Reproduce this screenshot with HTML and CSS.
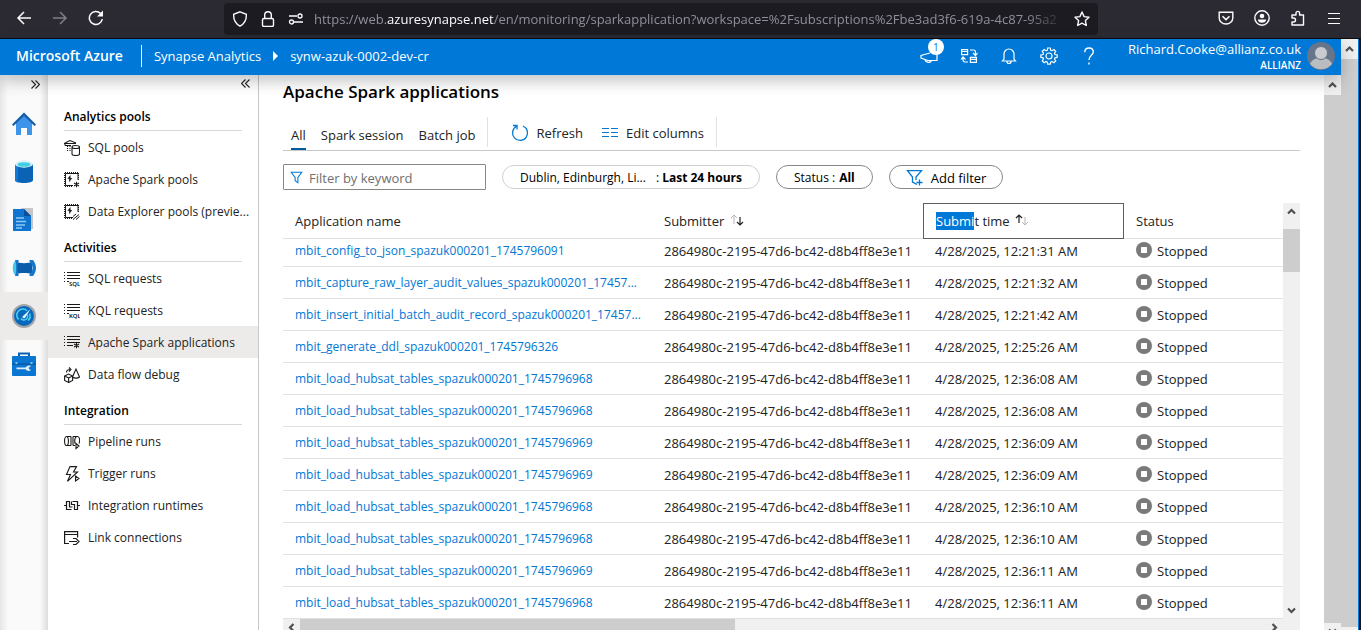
FILE: index.html
```
<!DOCTYPE html>
<html lang="en">
<head>
  <meta charset="UTF-8">
  <title>Synapse Analytics</title>
  <meta name="viewport" content="width=device-width, initial-scale=1.0">
  <link rel="stylesheet" href="styles.css">
</head>
<body>

  <svg class="sprite" aria-hidden="true">
    <symbol id="up" viewBox="0 0 17 17"><path d="M5 10.500l3.500-3.500 3.500 3.500" fill="none" stroke="#505050" stroke-width="2.200"/></symbol>
    <symbol id="stopped" viewBox="0 0 16 16"><circle cx="8" cy="8" r="8" fill="#7a7a7a"/><rect x="5" y="5" width="6" height="6" rx=".5" fill="#fff"/></symbol>
    <symbol id="chip" viewBox="0 0 16 16"><path d="M9 13.500H1.500V1.500h12.500V8" fill="none" stroke="#1b1a19"/><path d="M.5 1v13M1 .5h14M14.500 1v7M1 14.500h8" fill="none" stroke="#1b1a19" stroke-dasharray="1 1"/><path d="M6.500 3L3.300 6.800h1.900v3.500l3-4.200H6.500z" fill="#1b1a19"/></symbol>
    <symbol id="lines" viewBox="0 0 16 16"><path d="M3 1.500h13M3 4.500h13M3 7.500h13M0 1.500h1M0 4.500h1M0 7.500h1M0 10.500h1M3 10.500h2" stroke="#1b1a19"/></symbol>
    <symbol id="star6" viewBox="0 0 6 6"><path d="M3 0v6M.4 1.500l5.200 3M.4 4.500l5.200-3" stroke="#1b1a19" stroke-width="1.100"/></symbol>
    <symbol id="funnel" viewBox="0 0 16 16"><path d="M1.500 1.500h13L9.700 8v6.500L6.300 12V8z" fill="none" stroke="#0078d4" stroke-width="1.300"/></symbol>
  </svg>

  <div class="browser">
    <button class="icon-btn" aria-label="Back"><svg width="16" height="16" viewBox="0 0 16 16"><path d="M15 8H2M8 2L2 8l6 6" fill="none" stroke="#fbfbfe" stroke-width="1.500"/></svg></button>
    <button class="icon-btn dim" aria-label="Forward"><svg width="16" height="16" viewBox="0 0 16 16"><path d="M1 8h13M8 2l6 6-6 6" fill="none" stroke="#fbfbfe" stroke-width="1.500"/></svg></button>
    <button class="icon-btn" aria-label="Reload"><svg width="16" height="16" viewBox="0 0 16 16"><path d="M14.300 9a6.500 6.500 0 1 1-1.800-5.600" fill="none" stroke="#fbfbfe" stroke-width="1.500"/><path d="M15 .5v6H9z" fill="#fbfbfe"/></svg></button>
    <div class="address">
      <svg width="16" height="16" viewBox="0 0 16 16"><path d="M8 .8l6.300 2.500c.4 5.700-2 9.500-6.300 11.900C3.700 12.800 1.300 9 1.700 3.300z" fill="none" stroke="#fbfbfe" stroke-width="1.400"/></svg>
      <svg width="16" height="16" viewBox="0 0 16 16"><rect x="2.500" y="7.500" width="11" height="8" rx="1.500" fill="none" stroke="#fbfbfe" stroke-width="1.400"/><path d="M4.700 7.500V4a3.300 3.300 0 0 1 6.600 0v3.500" fill="none" stroke="#fbfbfe" stroke-width="1.400"/></svg>
      <svg width="16" height="16" viewBox="0 0 16 16"><path d="M1 5h8M6 11h9" stroke="#fbfbfe" stroke-width="1.400"/><circle cx="12" cy="5" r="2" fill="none" stroke="#fbfbfe" stroke-width="1.300"/><circle cx="3.500" cy="11" r="2" fill="none" stroke="#fbfbfe" stroke-width="1.300"/></svg>
      <div class="url" role="textbox" aria-label="Address">https://web.<span>azuresynapse.net</span>/en/monitoring/sparkapplication?workspace=%2Fsubscriptions%2Fbe3ad3f6-619a-4c87-95a2</div>
      <button class="star" aria-label="Bookmark"><svg width="16" height="16" viewBox="0 0 16 16"><path d="M8 1l2.100 4.600 4.900.6-3.600 3.400.9 4.900L8 12.100l-4.300 2.400.9-4.900L1 6.200l4.900-.6z" fill="none" stroke="#fbfbfe" stroke-width="1.400" stroke-linejoin="round"/></svg></button>
    </div>
    <div class="browser-tools">
      <button class="icon-btn" aria-label="Pocket"><svg width="16" height="16" viewBox="0 0 16 16"><path d="M1.200 2.200h13.600V8c0 3.500-3 6-6.800 6S1.200 11.500 1.200 8z" fill="none" stroke="#fbfbfe" stroke-width="1.400"/><path d="M4.500 6.300L8 9.600l3.500-3.300" fill="none" stroke="#fbfbfe" stroke-width="1.500"/></svg></button>
      <button class="icon-btn" aria-label="Account"><svg width="16" height="16" viewBox="0 0 16 16"><circle cx="8" cy="8" r="7.200" fill="none" stroke="#fbfbfe" stroke-width="1.400"/><circle cx="8" cy="6" r="2.300" fill="#fbfbfe"/><path d="M3.800 9.500h8.400c0 2-2 3.300-4.200 3.300S3.800 11.500 3.800 9.500z" fill="#fbfbfe"/></svg></button>
      <button class="icon-btn" aria-label="Extensions"><svg width="16" height="16" viewBox="0 0 16 16"><path d="M2 8V5h4V3.200a1.800 1.800 0 0 1 3.600 0V5H13.500v10H2v-3h1.500a1.900 1.900 0 0 0 0-4z" fill="none" stroke="#fbfbfe" stroke-width="1.400" stroke-linejoin="round"/></svg></button>
      <button class="icon-btn" aria-label="Menu"><svg width="16" height="16" viewBox="0 0 16 16"><path d="M2 3.500h12M2 8.500h12M2 13.500h12" stroke="#fbfbfe"/></svg></button>
    </div>
  </div>

  <div class="window">
    <div class="page">
      <header class="azure">
        <a class="brand" href="#">Microsoft Azure</a>
        <a class="crumb" href="#">Synapse Analytics</a>
        <svg width="5" height="10" viewBox="0 0 5 10"><path d="M0 0l5 5-5 5z" fill="#fff"/></svg>
        <a class="crumb" href="#">synw-azuk-0002-dev-cr</a>
        <div class="azure-tools">
          <button class="notify" aria-label="Announcements"><svg width="18" height="18" viewBox="0 0 18 18" fill="none" stroke="#fff" stroke-width="1.200"><path d="M17 4v9.500H8L1 11V8.500L10 6"/><path d="M5 12c0 3.500 5.500 4.500 6.500 1.500"/></svg><span class="badge">1</span></button>
          <button aria-label="Switch"><svg width="18" height="18" viewBox="0 0 18 18" fill="none" stroke="#fff" stroke-width="1.200"><path d="M1.600 2.600h6v5h-6zM1.600 4.500h6M10.400 10.400h6v5h-6zM10.400 12.400h6M10 3h3.500a2 2 0 0 1 2 2v3M13 6l2.500 2.500L17.500 6M8 15H5a2 2 0 0 1-2-2v-2.500M1 12.500L3 10l2.500 2.500"/></svg></button>
          <button aria-label="Notifications"><svg width="18" height="18" viewBox="0 0 18 18" fill="none" stroke="#fff" stroke-width="1.200"><path d="M2.500 14h13l-1.500-2V7a5 5 0 0 0-10 0v5zM7 14.500a2 2 0 0 0 4 0"/></svg></button>
          <button aria-label="Settings"><svg width="18" height="18" viewBox="0 0 18 18" fill="none" stroke="#fff" stroke-width="1.200"><path d="M7.700 1h2.600l.4 2.200 1.300.5 1.900-1.200 1.800 1.800-1.200 1.900.5 1.300 2.200.4v2.400l-2.200.5-.5 1.200 1.200 1.900-1.800 1.800-1.900-1.200-1.300.6-.4 2.100H7.700l-.4-2.100-1.300-.6-1.900 1.200-1.800-1.800L3.500 12 3 10.800l-2.200-.5V7.900L3 7.500l.5-1.300-1.200-1.900 1.800-1.800L6 3.700l1.300-.5z"/><circle cx="9" cy="9" r="3"/></svg></button>
          <button aria-label="Help"><svg width="18" height="18" viewBox="0 0 18 18" fill="none" stroke="#fff" stroke-width="1.400"><path d="M4.800 5.200C4.800 2.500 6.500 1 9 1s4.300 1.500 4.300 4C13.300 8.300 9 8.500 9 13"/><path d="M9 15.500v2"/></svg></button>
        </div>
        <div class="user"><span>Richard.Cooke@allianz.co.uk</span><strong>ALLIANZ</strong></div>
        <svg class="avatar" width="28" height="28" viewBox="0 0 28 28"><circle cx="14" cy="14" r="14" fill="#66758a"/><path d="M3 22c2-5 6-6 11-6s9 1 11 6a14 14 0 0 1-22 0z" fill="#b9bcc0"/><circle cx="14" cy="11" r="6.500" fill="#c9cbce" stroke="#66758a"/></svg>
      </header>

      <div class="workspace">
        <nav class="rail" aria-label="Hubs">
          <button class="expand" aria-label="Expand"><svg width="9" height="9" viewBox="0 0 9 9"><path d="M.5.500l4 4-4 4M4.500.500l4 4-4 4" fill="none" stroke="#222" stroke-width="1.100"/></svg></button>
          <a href="#" aria-label="Home"><svg width="24" height="24" viewBox="0 0 24 24"><path d="M4 11l8-8 8 8v12h-5v-7H9v7H4z" fill="#3d94e8"/><path d="M9 16h6v7H9z" fill="#fff"/><path d="M0 12.500L12 .5l12 12-1.500 1.500L12 4 1.500 14z" fill="#155ea8"/></svg></a>
          <a href="#" aria-label="Data"><svg width="24" height="24" viewBox="0 0 24 24"><path d="M3 4v16c0 2 4 3 9 3s9-1 9-3V4z" fill="#0a63b5"/><path d="M3 4v16c0 1 1 2 3 2.500V5z" fill="#0f7ad8"/><ellipse cx="12" cy="4" rx="9" ry="3.700" fill="#d9f1f8"/><ellipse cx="12" cy="4.500" rx="6.500" ry="2.300" fill="#40cde3"/></svg></a>
          <a href="#" aria-label="Develop"><svg width="24" height="24" viewBox="0 0 24 24"><path d="M9 0h12v21H9z" fill="#c4c6c9"/><path d="M1 1h11l7 7v15H1z" fill="#0f73cf"/><path d="M12 1v7h7z" fill="#0a4f98"/><path d="M4 10h8M4 13.500h10M4 17h9M4 20h6" stroke="#8ecbf7" stroke-width="1.300"/></svg></a>
          <a href="#" aria-label="Integrate"><svg width="24" height="24" viewBox="0 0 24 24"><path d="M4 6c3 1.500 13 1.500 16 0v12c-3-1.500-13-1.500-16 0z" fill="#0a5cab"/><path d="M4.500 4C-.5 6-.5 18 4.500 20z" fill="#45c6e8"/><path d="M3 4h3.500v2.500c-1.500 3-1.500 8 0 11V20H3c2-5 2-11 0-16zM17.500 4h3.500c4 5 4 11 0 16h-3.500v-1.500c4-4 4-9 0-13z" fill="#1577cb"/></svg></a>
          <a href="#" class="current" aria-label="Monitor"><svg width="24" height="24" viewBox="0 0 24 24"><circle cx="12" cy="12" r="12" fill="#a4a6aa"/><circle cx="12" cy="12" r="10" fill="#0868bc"/><path d="M6.600 15.500A6 6 0 0 1 15 6.800M17.500 9.500a6 6 0 0 1-1.500 7M15 10.500a3.500 3.500 0 0 1-6 4" fill="none" stroke="#4bd0ef" stroke-width="1.500"/><path d="M10.500 12.500L18.500 5l-5.500 9a1.600 1.600 0 0 1-2.500-1.500z" fill="#dff5fb"/></svg></a>
          <a href="#" aria-label="Manage"><svg width="24" height="24" viewBox="0 0 24 24"><path d="M7 5V1.500h10V5" fill="none" stroke="#0b62b3" stroke-width="2"/><rect y="4" width="24" height="20" rx="1" fill="#0b75d2"/><path d="M0 11h24v2H0z" fill="#0961b0"/><path d="M3.500 10h2v2h-2zM18.500 10h2v2h-2z" fill="#6cc5f5"/><path d="M4.500 15.500h9c2-2 3.500-2.500 5.500-1.500l-2 1.500v1.500l2 1c-2 1.500-4 1-5.500-.8h-9z" fill="#d9ecf8"/></svg></a>
        </nav>

        <nav class="side" aria-label="Monitor">
          <button class="collapse" aria-label="Collapse"><svg width="9" height="9" viewBox="0 0 9 9"><path d="M4.500.500l-4 4 4 4M8.500.500l-4 4 4 4" fill="none" stroke="#222" stroke-width="1.100"/></svg></button>
          <h2>Analytics pools</h2>
          <a href="#"><svg width="16" height="16" viewBox="0 0 16 16" fill="none" stroke="#1b1a19" stroke-width="1.100"><path d="M1 5.500V3L6 .6 12 3M0 3.500h12M1 5.500h6" /><path d="M3.500 6v5M6 6v5" stroke-dasharray="1 1"/><path d="M8 7v7c0 2 7.500 2 7.500 0V7c0-2-7.500-2-7.500 0zM8 7c0 2 7.500 2 7.500 0"/></svg>SQL pools</a>
          <a href="#"><svg width="16" height="16" viewBox="0 0 16 16"><use href="#chip"/><use href="#star6" x="9.500" y="9.500" width="6" height="6"/></svg>Apache Spark pools</a>
          <a href="#"><svg width="16" height="16" viewBox="0 0 16 16"><use href="#chip"/><path d="M9 12.500l3-2.500M9 15.500l6-5M12 15.500l3.500-3" stroke="#1b1a19"/></svg>Data Explorer pools (previe...</a>
          <h2>Activities</h2>
          <a href="#"><svg width="16" height="16" viewBox="0 0 16 16"><use href="#lines"/><text class="tiny" x="5" y="15">SQL</text></svg>SQL requests</a>
          <a href="#"><svg width="16" height="16" viewBox="0 0 16 16"><use href="#lines"/><text class="tiny" x="5" y="15">KQL</text></svg>KQL requests</a>
          <a href="#" class="current"><svg width="16" height="16" viewBox="0 0 16 16"><use href="#lines"/><path d="M3 10.500h6" stroke="#1b1a19"/><use href="#star6" x="9.500" y="7.500" width="6" height="6"/></svg>Apache Spark applications</a>
          <a href="#"><svg width="16" height="16" viewBox="0 0 16 16" fill="none" stroke="#1b1a19" stroke-width="1.100"><path d="M.6 9l4-2 4 2v4.500l-4 2-4-2zM.6 9l4 2 4-2M4.600 11v4.500M2.500 5.500c0-2 1-3 3.500-3M5 .5l2 2-2 2M12 2L8.500 10c1.500 1.500 5.500 1.500 7 0z"/></svg>Data flow debug</a>
          <h2>Integration</h2>
          <a href="#"><svg width="16" height="16" viewBox="0 0 16 16" fill="none" stroke="#1b1a19" stroke-width="1.100"><path d="M2.500 2.500c-2.600 0-2.600 9 0 9s2.600-9 0-9zM2.500 2.500H7M2.500 11.500H7M7 2.500v9M9 2.500v9M9 2.500h4.500c2.500 0 2.500 5 1.500 7M9 11.500h2M12.500 2.500c-2 1-2 5-1.500 7M12 9.500v5l3-2.500z"/></svg>Pipeline runs</a>
          <a href="#"><svg width="16" height="16" viewBox="0 0 16 16" fill="none" stroke="#1b1a19" stroke-width="1.100"><path d="M6 .6h6.500L9.500 6h4L3.500 15.300 6.500 8.500h-4zM11.500 10v5l3.500-2.500z"/></svg>Trigger runs</a>
          <a href="#"><svg width="16" height="16" viewBox="0 0 16 16" fill="none" stroke="#1b1a19" stroke-width="1.200"><path d="M0 7.500h2.500M13.500 7.500H16M7.500 11.500h-5v-8h3v5.500h3M8.500 3.500h5v8h-3V6.500h-3V3.500"/></svg>Integration runtimes</a>
          <a href="#"><svg width="16" height="16" viewBox="0 0 16 16" fill="none" stroke="#1b1a19" stroke-width="1.200"><path d="M5 13.500H.6V1.600h13v6M.6 4.500h13M5 11.500h8M9 8.500h3l3 3-3 3H9"/></svg>Link connections</a>
        </nav>

        <main>
          <h1>Apache Spark applications</h1>
          <div class="toolbar">
            <div class="tabs">
              <button class="active">All</button>
              <button>Spark session</button>
              <button>Batch job</button>
            </div>
            <div class="commands">
              <button><svg width="18" height="18" viewBox="0 0 18 18" fill="none" stroke="#0078d4" stroke-width="1.300"><path d="M12 2a7.500 7.500 0 1 1-6.500.3M2 1.500h4v4"/></svg>Refresh</button>
              <button><svg width="18" height="18" viewBox="0 0 18 18" stroke="#0078d4"><path d="M1 4.500h7M1 8.500h7M1 12.500h7M10 4.500h7M10 8.500h7M10 12.500h7"/></svg>Edit columns</button>
            </div>
          </div>

          <div class="filters">
            <label class="search"><svg width="13" height="13"><use href="#funnel"/></svg><input type="text" placeholder="Filter by keyword" aria-label="Filter by keyword"></label>
            <button class="pill light"><span>Dublin, Edinburgh, Li...</span><span>: <b>Last 24 hours</b></span></button>
            <button class="pill">Status : <b>All</b></button>
            <button class="pill add"><svg width="18" height="18" viewBox="0 0 18 18" fill="none" stroke="#0078d4" stroke-width="1.300"><path d="M11 15.500L6.500 13V8L1.500 1.600h14L10 8v3M13.500 10.500v6M10.500 13.500h6"/></svg>Add filter</button>
          </div>

          <div class="grid">
            <table>
              <colgroup><col class="c-name"><col class="c-submitter"><col class="c-time"><col></colgroup>
              <thead>
                <tr>
                  <th>Application name</th>
                  <th>Submitter <svg width="14" height="14" viewBox="0 0 14 14" fill="none"><path d="M4 11V2M1 5l3-3 3 3" stroke="#b5b5b5"/><path d="M10 4v8M7 9l3 3 3-3" stroke="#222" stroke-width="1.200"/></svg></th>
                  <th class="focused"><mark>Submi</mark>t time <svg width="14" height="14" viewBox="0 0 14 14" fill="none"><path d="M4 10V2M1 5l3-3 3 3" stroke="#222" stroke-width="1.200"/><path d="M10 4v8M7 9l3 3 3-3" stroke="#b5b5b5"/></svg></th>
                  <th>Status</th>
                </tr>
              </thead>
              <tbody>
                <tr><td><a href="#">mbit_config_to_json_spazuk000201_1745796091</a></td><td>2864980c-2195-47d6-bc42-d8b4ff8e3e11</td><td>4/28/2025, 12:21:31 AM</td><td><svg width="16" height="16"><use href="#stopped"/></svg>Stopped</td></tr>
                <tr><td><a href="#">mbit_capture_raw_layer_audit_values_spazuk000201_17457...</a></td><td>2864980c-2195-47d6-bc42-d8b4ff8e3e11</td><td>4/28/2025, 12:21:32 AM</td><td><svg width="16" height="16"><use href="#stopped"/></svg>Stopped</td></tr>
                <tr><td><a href="#">mbit_insert_initial_batch_audit_record_spazuk000201_17457...</a></td><td>2864980c-2195-47d6-bc42-d8b4ff8e3e11</td><td>4/28/2025, 12:21:42 AM</td><td><svg width="16" height="16"><use href="#stopped"/></svg>Stopped</td></tr>
                <tr><td><a href="#">mbit_generate_ddl_spazuk000201_1745796326</a></td><td>2864980c-2195-47d6-bc42-d8b4ff8e3e11</td><td>4/28/2025, 12:25:26 AM</td><td><svg width="16" height="16"><use href="#stopped"/></svg>Stopped</td></tr>
                <tr><td><a href="#">mbit_load_hubsat_tables_spazuk000201_1745796968</a></td><td>2864980c-2195-47d6-bc42-d8b4ff8e3e11</td><td>4/28/2025, 12:36:08 AM</td><td><svg width="16" height="16"><use href="#stopped"/></svg>Stopped</td></tr>
                <tr><td><a href="#">mbit_load_hubsat_tables_spazuk000201_1745796968</a></td><td>2864980c-2195-47d6-bc42-d8b4ff8e3e11</td><td>4/28/2025, 12:36:08 AM</td><td><svg width="16" height="16"><use href="#stopped"/></svg>Stopped</td></tr>
                <tr><td><a href="#">mbit_load_hubsat_tables_spazuk000201_1745796969</a></td><td>2864980c-2195-47d6-bc42-d8b4ff8e3e11</td><td>4/28/2025, 12:36:09 AM</td><td><svg width="16" height="16"><use href="#stopped"/></svg>Stopped</td></tr>
                <tr><td><a href="#">mbit_load_hubsat_tables_spazuk000201_1745796969</a></td><td>2864980c-2195-47d6-bc42-d8b4ff8e3e11</td><td>4/28/2025, 12:36:09 AM</td><td><svg width="16" height="16"><use href="#stopped"/></svg>Stopped</td></tr>
                <tr><td><a href="#">mbit_load_hubsat_tables_spazuk000201_1745796968</a></td><td>2864980c-2195-47d6-bc42-d8b4ff8e3e11</td><td>4/28/2025, 12:36:10 AM</td><td><svg width="16" height="16"><use href="#stopped"/></svg>Stopped</td></tr>
                <tr><td><a href="#">mbit_load_hubsat_tables_spazuk000201_1745796968</a></td><td>2864980c-2195-47d6-bc42-d8b4ff8e3e11</td><td>4/28/2025, 12:36:10 AM</td><td><svg width="16" height="16"><use href="#stopped"/></svg>Stopped</td></tr>
                <tr><td><a href="#">mbit_load_hubsat_tables_spazuk000201_1745796969</a></td><td>2864980c-2195-47d6-bc42-d8b4ff8e3e11</td><td>4/28/2025, 12:36:11 AM</td><td><svg width="16" height="16"><use href="#stopped"/></svg>Stopped</td></tr>
                <tr><td><a href="#">mbit_load_hubsat_tables_spazuk000201_1745796968</a></td><td>2864980c-2195-47d6-bc42-d8b4ff8e3e11</td><td>4/28/2025, 12:36:11 AM</td><td><svg width="16" height="16"><use href="#stopped"/></svg>Stopped</td></tr>
              </tbody>
            </table>
            <div class="vbar short">
              <svg width="17" height="17"><use href="#up"/></svg>
              <div class="thumb"></div>
              <svg class="down" width="17" height="17"><use href="#up"/></svg>
            </div>
            <div class="hbar">
              <svg class="left" width="17" height="17"><use href="#up"/></svg>
              <div class="track"><div class="thumb"></div></div>
              <svg class="right" width="17" height="17"><use href="#up"/></svg>
            </div>
            <div class="corner"></div>
          </div>
        </main>

        <div class="vbar inner">
          <svg width="17" height="20"><use href="#up"/></svg>
          <div class="thumb"></div>
          <svg class="down cut" width="17" height="17"><use href="#up"/></svg>
        </div>
      </div>
    </div>

    <div class="vbar outer">
      <svg width="17" height="20"><use href="#up"/></svg>
      <div class="thumb"></div>
      <div class="end"></div>
    </div>
  </div>

</body>
</html>
```
FILE: styles.css
```
* {
  box-sizing: border-box;
}

body {
  margin: 0;
  height: 100vh;
  overflow: hidden;
  display: flex;
  flex-direction: column;
  background: white;
  color: #222;
  font-family: "Open Sans", "Noto Sans", sans-serif;
  font-size: 13px;
  line-height: 18px;
}

button {
  margin: 0;
  padding: 0;
  border: none;
  background: none;
  color: inherit;
  font: inherit;
  cursor: pointer;
}

a {
  color: inherit;
  text-decoration: none;
}

svg {
  flex: none;
}

.sprite {
  display: none;
}

/* browser bar */
.browser {
  flex: none;
  display: flex;
  align-items: center;
  height: 39px;
  padding: 0 19px 2px 16px;
  gap: 20px;
  background: #2b2a33;
  border-bottom: 1px solid #0c0c0d;
}

.icon-btn {
  display: flex;
}

.dim {
  opacity: 0.4;
}

.address {
  flex: 1;
  display: flex;
  align-items: center;
  gap: 12px;
  min-width: 0;
  height: 32px;
  margin: 2px 100px 0 100px;
  padding: 0 8px;
  background: #1c1b22;
  border-radius: 4px;
}

.url {
  flex: 1;
  min-width: 0;
  margin: 0 -4px 0 -2px;
  overflow: hidden;
  white-space: nowrap;
  color: #8f8f9a;
  mask-image: linear-gradient(to left, transparent, black 40px);
}

.url span {
  color: #fbfbfe;
}

.star {
  display: flex;
}

.browser-tools {
  display: flex;
  gap: 20px;
}

.window {
  flex: 1;
  min-height: 0;
  display: flex;
  border-right: 2px solid #10141c;
}

.page {
  flex: 1;
  min-width: 0;
  display: flex;
  flex-direction: column;
}

/* azure header */
.azure {
  flex: none;
  position: relative;
  z-index: 1;
  display: flex;
  align-items: center;
  height: 36px;
  padding: 0 6px 2px 16px;
  background: #0078d7;
  color: white;
  box-shadow: 0 6px 16px rgba(0, 0, 0, 0.24);
}

.brand {
  padding-right: 18px;
  border-right: 1px solid white;
  font-size: 14px;
  font-weight: 600;
  line-height: 22px;
}

.crumb {
  margin: 0 12px;
}

.azure-tools {
  display: flex;
  gap: 22px;
  margin-left: auto;
  margin-right: 30px;
}

.azure-tools button {
  display: flex;
}

.notify {
  position: relative;
}

.badge {
  position: absolute;
  top: -8px;
  left: 8px;
  width: 16px;
  height: 16px;
  border-radius: 8px;
  background: white;
  color: #0078d7;
  font-size: 10px;
  line-height: 16px;
}

.user {
  display: flex;
  flex-direction: column;
  align-items: flex-end;
  margin-right: 6px;
  padding-top: 2px;
  line-height: 16px;
}

.user strong {
  font-size: 10px;
  font-weight: 600;
}

.workspace {
  flex: 1;
  min-height: 0;
  display: flex;
}

/* left rail */
.rail {
  flex: none;
  width: 48px;
  background: linear-gradient(to right, #e6e6e6, #fafafa 8px, #fafafa 40px, #ddd);
}

.rail a {
  display: flex;
  align-items: center;
  justify-content: center;
  height: 48px;
}

.rail .current {
  background: #edebe9;
}

.expand,
.collapse {
  display: flex;
  margin-left: auto;
}

.expand {
  height: 25px;
  padding: 5px 8px 0 0;
}

/* side menu */
.side {
  flex: none;
  width: 211px;
  border-right: 1px solid #c8c8c8;
}

.collapse {
  height: 21px;
  padding: 4px 8px 0 0;
}

.side h2 {
  margin: 0 16px;
  padding: 12px 0 4px;
  border-bottom: 1px solid #d6d6d6;
  color: black;
  font-size: 12px;
  font-weight: 600;
  line-height: 18px;
}

.side a {
  display: flex;
  align-items: center;
  gap: 8px;
  height: 32px;
  padding: 2px 0 0 16px;
  font-size: 12px;
  white-space: nowrap;
}

.side .current {
  background: #edebe9;
}

.tiny {
  font-size: 6px;
  font-weight: 600;
}

/* content */
main {
  flex: 1;
  min-width: 0;
  padding: 0 24px;
}

h1 {
  position: relative;
  z-index: 2;
  margin: 0;
  padding: 5px 0 13px;
  color: black;
  font-size: 17px;
  font-weight: 600;
  line-height: 24px;
}

.toolbar {
  display: flex;
  height: 34px;
  border-bottom: 1px solid #c8c8c8;
}

.tabs {
  display: flex;
  gap: 15px;
  padding: 0 12px 0 8px;
}

.tabs button {
  padding-top: 4px;
  border-bottom: 2px solid transparent;
}

.tabs .active {
  border-color: #005a9e;
}

.commands {
  display: flex;
  gap: 18px;
  height: 30px;
  padding: 2px 12px 0 23px;
  border-left: 1px solid #e1e1e1;
  border-right: 1px solid #e1e1e1;
}

.commands button {
  display: flex;
  align-items: center;
  gap: 7px;
}

.filters {
  display: flex;
  align-items: center;
  gap: 16px;
  padding: 13px 0;
}

.search {
  display: flex;
  align-items: center;
  gap: 6px;
  width: 203px;
  height: 26px;
  padding: 0 6px;
  border: 1px solid #8a8886;
  border-radius: 1px;
}

.search input {
  flex: 1;
  min-width: 0;
  padding: 2px 0 0;
  border: none;
  outline: none;
  font: inherit;
}

.search input::placeholder {
  color: #6f6f6f;
}

.pill {
  display: flex;
  align-items: center;
  gap: 4px;
  height: 24px;
  padding: 1px 17px 0;
  border: 1px solid #8a8886;
  border-radius: 12px;
  color: black;
  font-size: 12px;
}

.light {
  gap: 10px;
  border-color: #d0d0d0;
}

.add {
  gap: 7px;
  padding: 1px 16px 0;
  font-size: 13px;
}

/* applications table with its scroll bars */
.grid {
  display: grid;
  grid-template-columns: 1fr 17px;
}

table {
  width: 100%;
  table-layout: fixed;
  border-collapse: separate;
  border-spacing: 0;
}

.c-name {
  width: 369px;
}

.c-submitter {
  width: 271px;
}

.c-time {
  width: 201px;
}

th {
  height: 36px;
  padding: 0 12px;
  border-bottom: 1px solid #e1e1e1;
  font-weight: 500;
  text-align: left;
}

th svg {
  margin-left: 2px;
  vertical-align: -1px;
}

.focused {
  border: 1px solid #605e5c;
}

mark {
  background: #0078d7;
  color: white;
}

td {
  height: 32px;
  padding: 0 0 6px 12px;
  border-bottom: 1px solid #e1e1e1;
  vertical-align: bottom;
  white-space: nowrap;
}

tbody tr:first-child td {
  height: 28px;
}

td a {
  color: #0078d4;
  font-size: 12px;
}

td svg {
  margin-right: 5px;
  vertical-align: -2px;
}

.vbar {
  flex: none;
  display: flex;
  flex-direction: column;
  width: 17px;
  background: #f0f0f0;
}

.thumb {
  background: #cdcdcd;
}

.short .thumb {
  height: 43px;
  margin-top: 9px;
}

.short .down {
  margin-top: auto;
}

.down {
  transform: rotate(180deg);
}

.left {
  transform: rotate(-90deg);
}

.right {
  transform: rotate(90deg);
}

.hbar {
  display: flex;
}

.hbar,
.corner {
  background: #f0f0f0;
}

.track {
  flex: 1;
  display: flex;
}

.track .thumb {
  width: 45%;
}

.inner .thumb,
.outer .thumb {
  flex: 1;
}

.cut {
  margin-bottom: -10px;
}

.outer {
  width: 18px;
  border-right: 1px solid #0078d7;
}

.end {
  height: 3px;
}
```
